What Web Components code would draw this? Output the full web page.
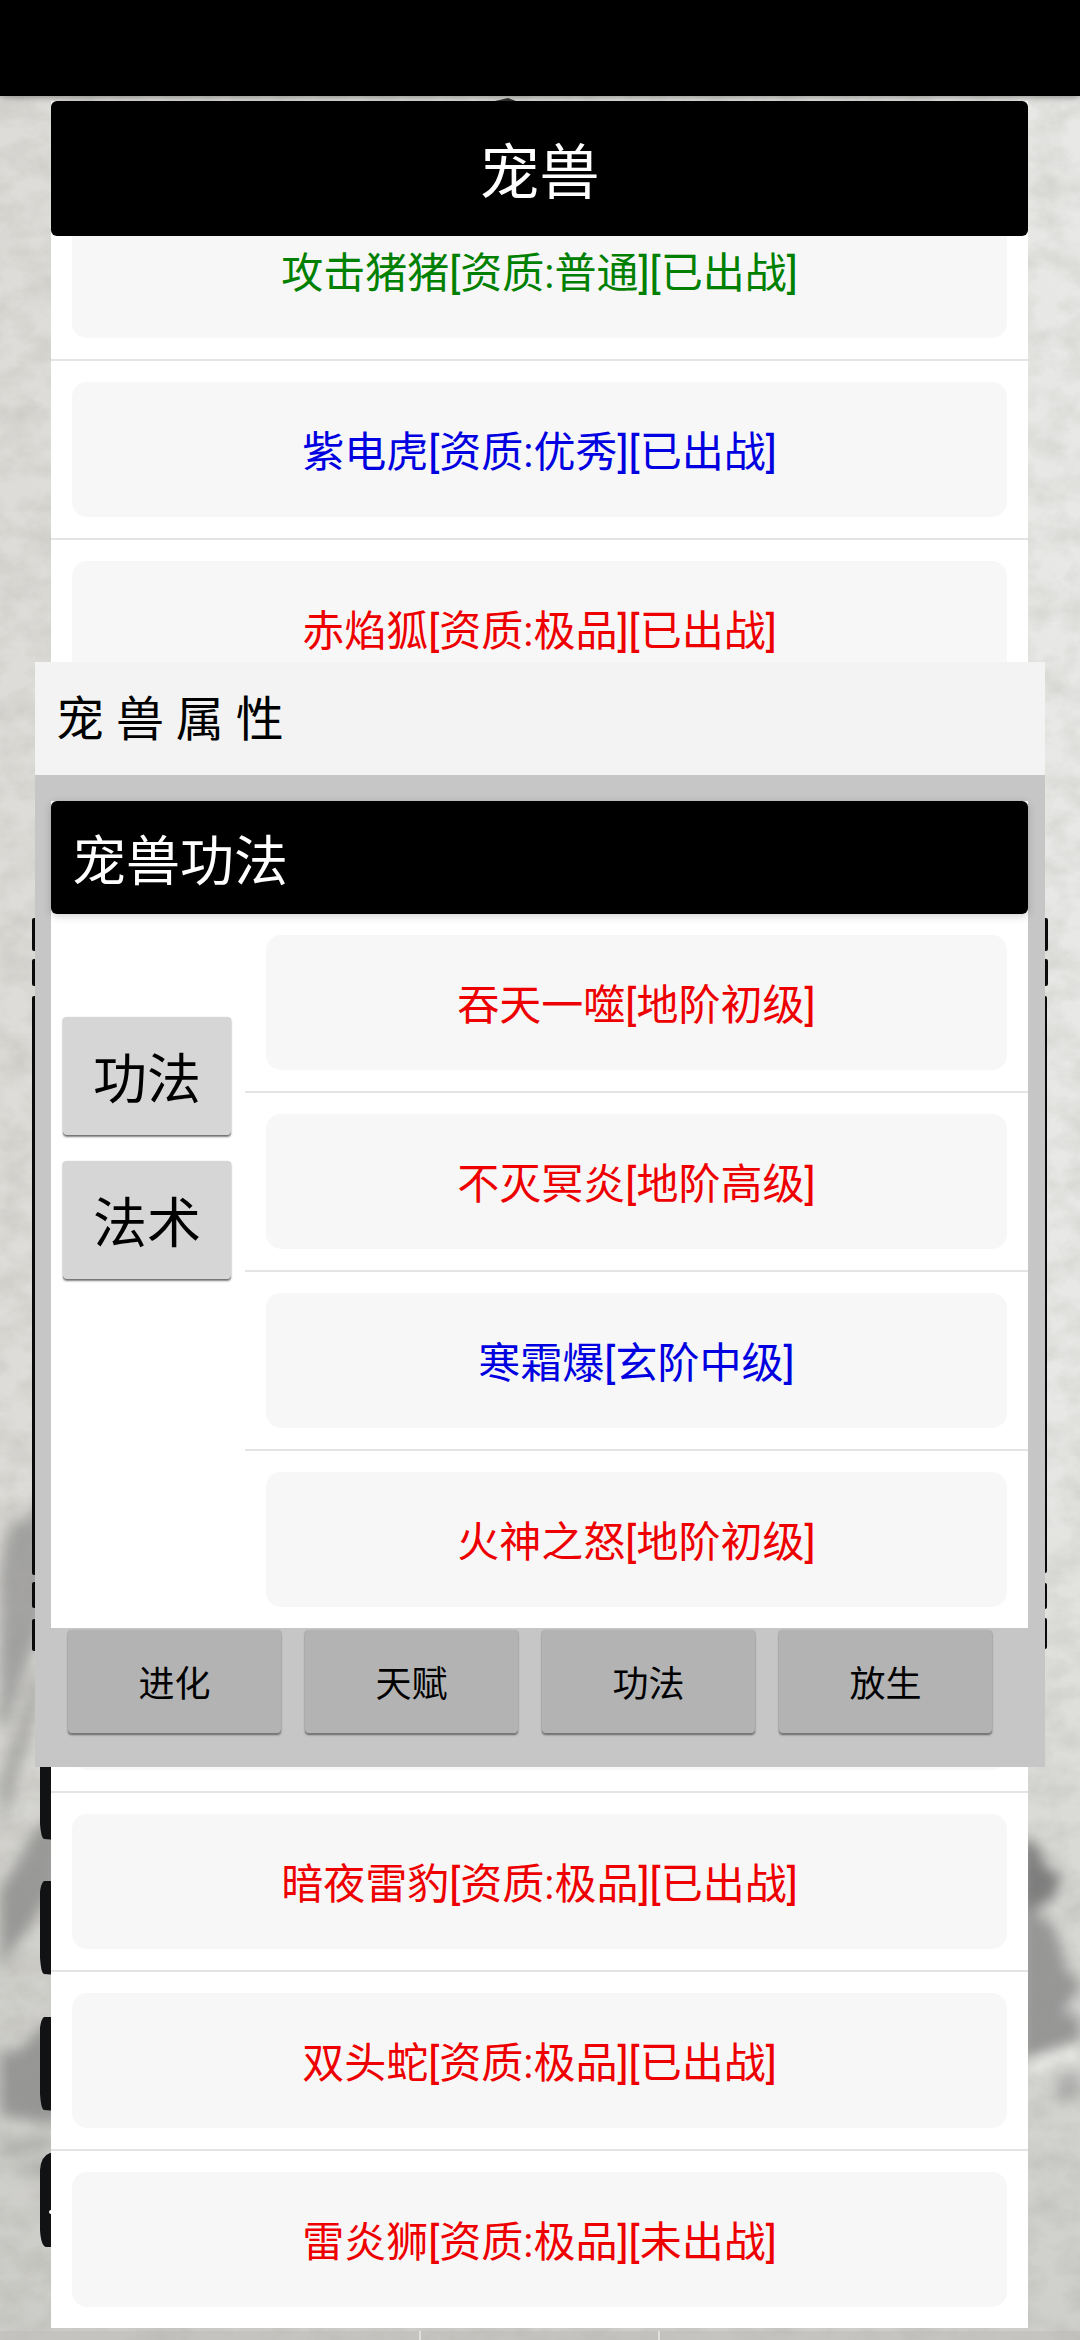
<!DOCTYPE html>
<html lang="zh-CN">
<head>
<meta charset="utf-8">
<meta name="viewport" content="width=device-width, initial-scale=1">
<title>宠兽</title>
<style>
    html, body {
        height: 100%;
        margin: 0;
    }
    body {
        font-family: Roboto, "Noto Sans CJK SC", sans-serif;
        color: #000;
        overflow: hidden;
    }
</style>
</head>
<body>

<game-screen>
    <ink-scene slot="scene"></ink-scene>
    <list-panel>
        <title-bar slot="header" size="large">宠兽</title-bar>
        <list-row quality="common">攻击猪猪[资质:普通][已出战]</list-row>
        <list-row quality="rare">紫电虎[资质:优秀][已出战]</list-row>
        <list-row quality="epic">赤焰狐[资质:极品][已出战]</list-row>
        <list-row blank></list-row>
        <list-row blank></list-row>
        <list-row blank></list-row>
        <list-row blank></list-row>
        <list-row blank></list-row>
        <list-row blank></list-row>
        <list-row quality="epic">暗夜雷豹[资质:极品][已出战]</list-row>
        <list-row quality="epic">双头蛇[资质:极品][已出战]</list-row>
        <list-row quality="epic">雷炎狮[资质:极品][未出战]</list-row>
    </list-panel>

    <pet-dialog slot="dialog">
        <span slot="title">宠 兽 属 性</span>
        <skill-panel>
            <title-bar slot="header">宠兽功法</title-bar>
            <game-button slot="tabs" size="large">功法</game-button>
            <game-button slot="tabs" size="large">法术</game-button>
            <list-row quality="epic">吞天一噬[地阶初级]</list-row>
            <list-row quality="epic">不灭冥炎[地阶高级]</list-row>
            <list-row quality="rare">寒霜爆[玄阶中级]</list-row>
            <list-row quality="epic">火神之怒[地阶初级]</list-row>
        </skill-panel>
        <game-button slot="actions">进化</game-button>
        <game-button slot="actions">天赋</game-button>
        <game-button slot="actions">功法</game-button>
        <game-button slot="actions">放生</game-button>
    </pet-dialog>
</game-screen>

<script>
    class GameScreen extends HTMLElement {
        constructor() {
            super();
            const shadowRoot = this.attachShadow({ mode: 'open' });
            shadowRoot.innerHTML = `
            <style>
                :host {
                    display: flex;
                    flex-direction: column;
                    position: relative;
                    height: 100%;
                    overflow: hidden;
                }
                #status {
                    flex: none;
                    height: 96px;
                    background: #000;
                    box-shadow: 0 0 8px rgba(0,0,0,0.5);
                    z-index: 1;
                }
                main {
                    flex: 1;
                    display: flex;
                    position: relative;
                    min-height: 0;
                    padding: 5px 52px 12px 51px;
                }
                #overlay {
                    position: absolute;
                    inset: 0;
                    display: flex;
                    align-items: center;
                    padding: 0 35px 7px;
                    z-index: 2;
                }
            </style>
            <slot name="scene"></slot>
            <div id="status"></div>
            <main>
                <slot></slot>
                <div id="overlay"><slot name="dialog"></slot></div>
            </main>
            `;
        }
    }

    // Paper texture with washed ink mountains and the edges of the main menu
    class InkScene extends HTMLElement {
        constructor() {
            super();
            const shadowRoot = this.attachShadow({ mode: 'open' });
            shadowRoot.innerHTML = `
            <style>
                :host {
                    position: absolute;
                    inset: 0;
                }
                svg {
                    display: block;
                    width: 100%;
                    height: 100%;
                }
            </style>
            <svg viewBox="0 0 1080 2340" preserveAspectRatio="none" aria-hidden="true">
                <defs>
                    <linearGradient id="paper" x1="0" x2="1" y1="0" y2="0">
                        <stop offset="0" stop-color="#dddcd8"/>
                        <stop offset="1" stop-color="#e8e8e6"/>
                    </linearGradient>
                    <linearGradient id="fade" x1="0" x2="0" y1="0" y2="1">
                        <stop offset="0.6" stop-color="#c8c8c4" stop-opacity="0"/>
                        <stop offset="0.85" stop-color="#c8c8c4" stop-opacity="0.6"/>
                        <stop offset="1" stop-color="#c8c8c4" stop-opacity="0.8"/>
                    </linearGradient>
                    <filter id="grain" x="0" y="0" width="100%" height="100%">
                        <feTurbulence type="fractalNoise" baseFrequency="0.03 0.04" numOctaves="4" seed="8"/>
                        <feColorMatrix values="0 0 0 0 0.3  0 0 0 0 0.3  0 0 0 0 0.28  0.4 0 0 0 -0.14"/>
                    </filter>
                    <filter id="wash" x="-50%" y="-20%" width="200%" height="140%">
                        <feGaussianBlur stdDeviation="7"/>
                    </filter>
                </defs>
                <rect width="1080" height="2340" fill="url(#paper)"/>
                <rect width="1080" height="2340" fill="url(#fade)"/>
                <g filter="url(#wash)">
                    <path d="M0 1560 L14 1518 L26 1522 L36 1500 L60 1560 L36 1640 L16 1700 L0 1740Z" fill="#929292" opacity="0.75"/>
                    <path d="M0 1780 L20 1720 L40 1660 L40 1700 L14 1790 L0 1830Z" fill="#8e8e8e" opacity="0.6"/>
                    <path d="M0 1890 L36 1830 L60 1810 L60 1880 L30 1926 L0 1966Z" fill="#808080" opacity="0.7"/>
                    <path d="M0 2052 L20 2050 L48 2020 L60 2090 L60 2124 L0 2116Z" fill="#888" opacity="0.8"/>
                    <path d="M0 2146 L52 2138 L52 2146 L0 2154Z M8 2172 L50 2160 L50 2172Z" fill="#888" opacity="0.7"/>
                    <path d="M1020 1836 L1038 1846 L1046 1868 L1062 1874 L1054 1898 L1020 1918Z" fill="#7c7c7c"/>
                    <path d="M1020 1900 L1056 1928 L1066 1968 L1080 1984 L1080 2040 L1020 2062Z" fill="#8c8c8c" opacity="0.85"/>
                    <path d="M1064 2014 L1080 1992 L1080 2010Z" fill="#e4e4e2"/>
                    <path d="M1028 2062 L1080 2046 L1080 2056 L1028 2074Z" fill="#f4f4f2"/>
                    <path d="M1060 2076 L1080 2072 L1080 2096 L1056 2104Z" fill="#999" opacity="0.7"/>
                </g>
                <rect width="1080" height="2340" filter="url(#grain)"/>
                <path d="M495 101 L508 98 L516 101Z" fill="#333"/>
                <g fill="#0a0a0a">
                    <rect x="32" y="918" width="20" height="33" rx="2"/>
                    <rect x="32" y="959" width="20" height="27" rx="2"/>
                    <rect x="32" y="996" width="20" height="579" rx="2"/>
                    <rect x="32" y="1582" width="20" height="26" rx="2"/>
                    <rect x="32" y="1619" width="20" height="32" rx="2"/>
                    <rect x="1028" y="918" width="20" height="33" rx="2"/>
                    <rect x="1028" y="959" width="20" height="27" rx="2"/>
                    <rect x="1028" y="996" width="19" height="577" rx="2"/>
                    <rect x="1028" y="1583" width="19" height="26" rx="2"/>
                    <rect x="1028" y="1618" width="19" height="31" rx="2"/>
                </g>
                <g fill="#101213">
                    <path d="M44 1746 H70 V1841 L44 1839 Q41 1838 40 1824 V1760 Q40 1748 44 1746Z"/>
                    <path d="M44 1881 H70 V1976 L44 1974 Q41 1973 40 1958 V1892 Q41 1883 44 1881Z"/>
                    <path d="M44 2017 H70 V2112 L44 2110 Q41 2109 40 2094 V2028 Q41 2019 44 2017Z"/>
                    <path d="M50 2153 H70 V2247 H46 Q41 2246 40 2230 V2170 Q41 2156 50 2153Z"/>
                </g>
                <circle cx="51" cy="2212" r="2" fill="#fff"/>
                <rect y="2331" width="1080" height="9" fill="#b8b6b3" opacity="0.4"/>
                <rect x="419" y="2331" width="2" height="9" fill="#e0e0de"/>
                <rect x="658" y="2331" width="2" height="9" fill="#e0e0de"/>
            </svg>
            `;
        }
    }

    class ListPanel extends HTMLElement {
        constructor() {
            super();
            const shadowRoot = this.attachShadow({ mode: 'open' });
            shadowRoot.innerHTML = `
            <style>
                :host {
                    flex: 1;
                    display: flex;
                    flex-direction: column;
                    min-width: 0;
                    background: #fff;
                }
                /* scrolled to its end, so the rows hang from the bottom edge */
                #list {
                    flex: 1;
                    display: flex;
                    flex-direction: column;
                    justify-content: flex-end;
                    min-height: 0;
                    overflow: hidden;
                }
            </style>
            <slot name="header"></slot>
            <div id="list" role="list"><slot></slot></div>
            `;
        }
    }

    class TitleBar extends HTMLElement {
        constructor() {
            super();
            const shadowRoot = this.attachShadow({ mode: 'open' });
            shadowRoot.innerHTML = `
            <style>
                :host {
                    display: block;
                    flex: none;
                    background: #000;
                    color: #fff;
                    border-radius: 6px;
                    box-shadow: 0 2px 8px rgba(0,0,0,0.2);
                    position: relative;
                }
                h2 {
                    margin: 0;
                    padding: 22px 21px 11px;
                    font-size: 54px;
                    line-height: 80px;
                    font-weight: 400;
                }
                :host([size="large"]) {
                    box-shadow: none;
                }
                :host([size="large"]) h2 {
                    padding: 33px 21px 22px;
                    font-size: 60px;
                    text-align: center;
                }
            </style>
            <h2><slot></slot></h2>
            `;
        }
    }

    class ListRow extends HTMLElement {
        constructor() {
            super();
            const tag = this.hasAttribute('blank') ? 'div' : 'button';
            const shadowRoot = this.attachShadow({ mode: 'open' });
            shadowRoot.innerHTML = `
            <style>
                :host {
                    display: block;
                    flex: none;
                    padding: 21px;
                    border-bottom: 2px solid #e4e4e4;
                    color: #ee0000;
                }
                :host(:last-of-type) {
                    border-bottom: none;
                }
                :host([quality="common"]) {
                    color: #008000;
                }
                :host([quality="rare"]) {
                    color: #0000e0;
                }
                .card {
                    display: block;
                    box-sizing: border-box;
                    width: 100%;
                    height: 135px;
                    padding: 0 0 2px;
                    border: none;
                    border-radius: 15px;
                    background: #f7f7f7;
                    color: inherit;
                    font: inherit;
                    font-size: 42px;
                    text-align: center;
                }
            </style>
            <${tag} class="card"><slot></slot></${tag}>
            `;
        }

        connectedCallback() {
            this.setAttribute('role', 'listitem');
        }
    }

    class GameButton extends HTMLElement {
        constructor() {
            super();
            const shadowRoot = this.attachShadow({ mode: 'open' });
            shadowRoot.innerHTML = `
            <style>
                :host {
                    display: block;
                }
                button {
                    display: block;
                    box-sizing: border-box;
                    width: 100%;
                    height: 104px;
                    padding: 0 0 2px;
                    border: none;
                    border-radius: 4px;
                    background: #b3b3b3;
                    box-shadow: inset 0 -1px 0 #777, 0 1px 2px rgba(0,0,0,0.5);
                    color: #000;
                    font: inherit;
                    font-size: 36px;
                }
                :host([size="large"]) button {
                    height: 119px;
                    background: #d6d6d6;
                    font-size: 54px;
                }
            </style>
            <button type="button"><slot></slot></button>
            `;
        }
    }

    class SkillPanel extends HTMLElement {
        constructor() {
            super();
            const shadowRoot = this.attachShadow({ mode: 'open' });
            shadowRoot.innerHTML = `
            <style>
                :host {
                    display: block;
                    background: #fff;
                }
                #content {
                    display: grid;
                    grid-template-columns: 194px 1fr;
                }
                #tabs {
                    display: flex;
                    flex-direction: column;
                    gap: 25px;
                    padding: 103px 14px 0 12px;
                }
            </style>
            <slot name="header"></slot>
            <div id="content">
                <div id="tabs"><slot name="tabs"></slot></div>
                <div role="list"><slot></slot></div>
            </div>
            `;
        }
    }

    class PetDialog extends HTMLElement {
        constructor() {
            super();
            const shadowRoot = this.attachShadow({ mode: 'open' });
            shadowRoot.innerHTML = `
            <style>
                :host {
                    flex: 1;
                    display: block;
                    min-width: 0;
                    background: #c6c6c6;
                }
                h1 {
                    margin: 0;
                    padding: 18px 21px 15px;
                    background: #f3f3f3;
                    font-size: 48px;
                    line-height: 80px;
                    font-weight: 400;
                }
                #body {
                    padding: 26px 17px 0 16px;
                }
                #actions {
                    display: grid;
                    grid-template-columns: repeat(4, 1fr);
                    gap: 24px;
                    padding: 2px 53px 33px 33px;
                }
            </style>
            <section role="dialog">
                <h1><slot name="title"></slot></h1>
                <div id="body"><slot></slot></div>
                <div id="actions"><slot name="actions"></slot></div>
            </section>
            `;
        }
    }

    customElements.define('game-screen', GameScreen);
    customElements.define('ink-scene', InkScene);
    customElements.define('list-panel', ListPanel);
    customElements.define('title-bar', TitleBar);
    customElements.define('list-row', ListRow);
    customElements.define('game-button', GameButton);
    customElements.define('skill-panel', SkillPanel);
    customElements.define('pet-dialog', PetDialog);
</script>
</body>
</html>
